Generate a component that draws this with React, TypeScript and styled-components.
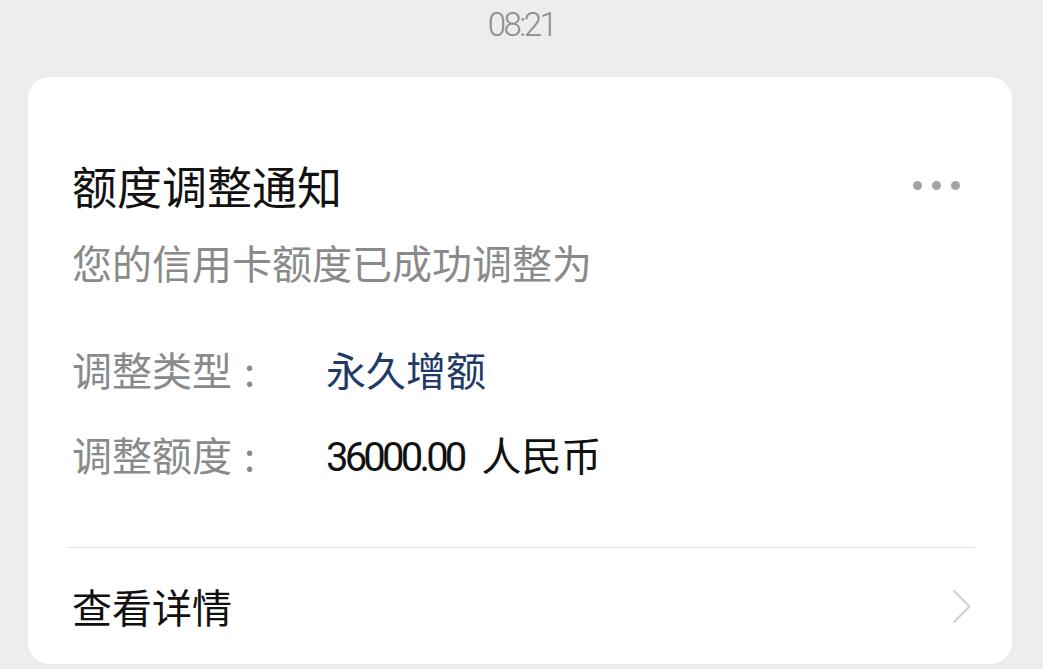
import { FC } from "react";
import styled, { createGlobalStyle } from "styled-components";

const GlobalStyle = createGlobalStyle`
  html, body {
    margin: 0;
    padding: 0;
    background: #ededed;
  }
  body {
    font-family: "Noto Sans CJK SC", "Noto Sans", sans-serif;
  }
`;

const Page = styled.div`
  width: 1043px;
  height: 669px;
  background: #ededed;
  overflow: hidden;
`;

const Time = styled.div`
  height: 50px;
  line-height: 50px;
  margin-bottom: 27px;
  text-align: center;
  font-family: Roboto, "Liberation Sans", sans-serif;
  font-weight: 300;
  font-size: 33px;
  letter-spacing: -2.5px;
  color: #8c8c8c;
`;

const Card = styled.div`
  margin: 0 31px 0 28px;
  height: 587px;
  background: #fff;
  border-radius: 22px;
  display: flex;
  flex-direction: column;
`;

const Body = styled.div`
  padding: 77px 52px 0 44px;
`;

const Header = styled.div`
  display: flex;
  align-items: center;
  justify-content: space-between;
`;

const Title = styled.h1`
  margin: 0;
  font-size: 45px;
  line-height: 64px;
  font-weight: 400;
  color: #111;
`;

const More = styled.div`
  display: flex;
  gap: 10px;
  margin-top: -2px;

  span {
    width: 9px;
    height: 9px;
    border-radius: 50%;
    background: #a3a3a3;
  }
`;

const Subtitle = styled.p`
  margin: 16px 0 0;
  font-size: 40px;
  line-height: 56px;
  color: #8a8a8a;
`;

const Rows = styled.div`
  margin-top: 51px;
  display: flex;
  flex-direction: column;
  gap: 29px;
`;

const Row = styled.div`
  display: grid;
  grid-template-columns: 254px 1fr;
  font-size: 40px;
  line-height: 56px;
`;

const Label = styled.span`
  color: #8a8a8a;

  b {
    font-weight: 400;
    padding-left: 12px;
  }
`;

const Value = styled.span<{ $accent?: boolean }>`
  color: ${(p) => (p.$accent ? "#223a68" : "#111")};
`;

const Amount = styled.span`
  font-family: Roboto, "Noto Sans", sans-serif;
  font-size: 40px;
  letter-spacing: -3.8px;
  margin-right: 18px;
`;

const Divider = styled.div`
  margin: 61px 37px 0 39px;
  height: 1px;
  background: #e6e6e6;
`;

const Footer = styled.div`
  flex: 1;
  display: flex;
  align-items: center;
  justify-content: space-between;
  padding: 0 40px 0 44px;
`;

const FooterText = styled.span`
  font-size: 40px;
  line-height: 56px;
  color: #111;
`;

const Chevron: FC = () => (
  <svg width="20" height="35" viewBox="0 0 20 35" fill="none">
    <path
      d="M2 2 L17.5 17.5 L2 33"
      stroke="#d2d2d2"
      strokeWidth="2.2"
      strokeLinecap="round"
      strokeLinejoin="round"
    />
  </svg>
);

const App: FC = () => (
  <Page>
    <GlobalStyle />
    <Time>08:21</Time>
    <Card>
      <Body>
        <Header>
          <Title>额度调整通知</Title>
          <More>
            <span />
            <span />
            <span />
          </More>
        </Header>
        <Subtitle>您的信用卡额度已成功调整为</Subtitle>
        <Rows>
          <Row>
            <Label>
              调整类型<b>:</b>
            </Label>
            <Value $accent>永久增额</Value>
          </Row>
          <Row>
            <Label>
              调整额度<b>:</b>
            </Label>
            <Value>
              <Amount>36000.00</Amount>人民币
            </Value>
          </Row>
        </Rows>
      </Body>
      <Divider />
      <Footer>
        <FooterText>查看详情</FooterText>
        <Chevron />
      </Footer>
    </Card>
  </Page>
);

export default App;
